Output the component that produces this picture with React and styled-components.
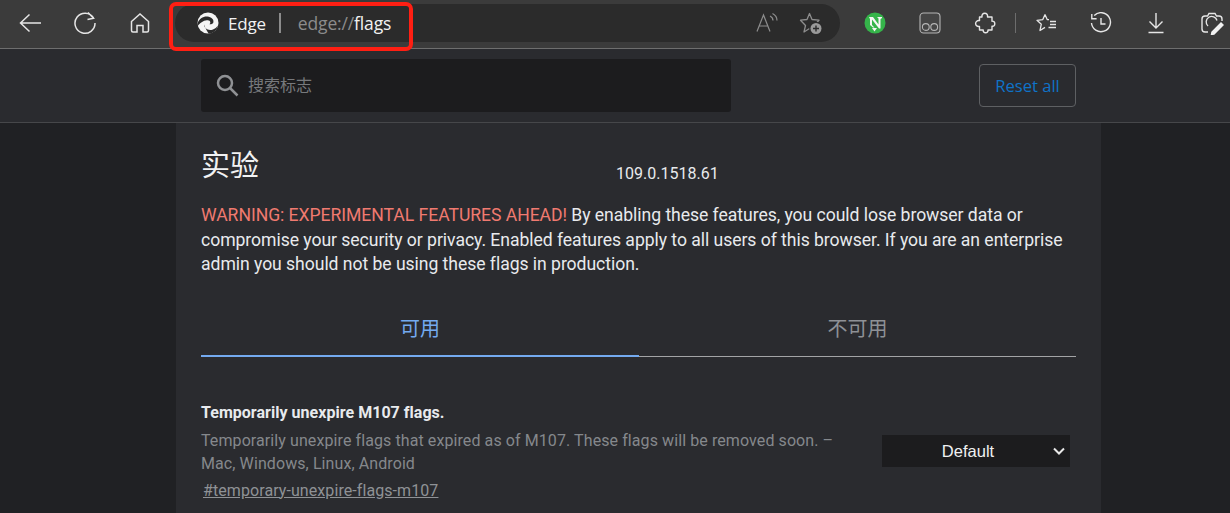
import React from "react";
import styled, { createGlobalStyle } from "styled-components";

const Global = createGlobalStyle`
  html, body { margin: 0; padding: 0; background: #202124; }
  body { width: 1230px; height: 513px; overflow: hidden; font-family: Roboto, "Noto Sans CJK SC", sans-serif; }
  * { box-sizing: border-box; }
`;

const Page = styled.div`
  width: 1230px;
  height: 513px;
  overflow: hidden;
  background: #202124;
  display: flex;
  flex-direction: column;
`;

const Toolbar = styled.header`
  position: relative;
  flex: none;
  height: 49px;
  background: #3b3b3b;
  border-bottom: 1px solid #6e6e6e;
  display: flex;
  align-items: center;
  padding: 0 0 2px 12px;
`;

const Tool = styled.div`
  flex: none;
  width: ${(p) => p.$w || 55}px;
  height: 30px;
  display: flex;
  align-items: center;
  justify-content: center;
  color: #e6e6e6;
`;

const AddressBar = styled.div`
  flex: none;
  width: 665px;
  height: 38px;
  margin: 0 8px 0 17px;
  border-radius: 19px;
  background: #2b2b2b;
  display: flex;
  align-items: center;
  padding-left: 22px;
  font-family: "Open Sans", "Noto Sans", sans-serif;
`;

const SiteName = styled.span`
  margin-left: 9px;
  font-size: 17px;
  letter-spacing: -0.2px;
  color: #f2f2f2;
`;

const BarDivider = styled.span`
  width: 2px;
  height: 20px;
  margin: 0 17px 0 13px;
  background: #8c8c8c;
`;

const Url = styled.span`
  font-size: 17.5px;
  letter-spacing: -0.15px;
  color: #8b8b8b;
`;

const UrlStrong = styled.span`
  color: #f2f2f2;
`;

const BarActions = styled.div`
  margin-left: auto;
  display: flex;
  align-items: center;
  gap: 20px;
  padding-right: 17px;
  color: #8d8d8d;
`;

const ToolDivider = styled.span`
  flex: none;
  width: 1px;
  height: 20px;
  margin-left: 4px;
  background: #6d6d6d;
`;

const Callout = styled.div`
  position: absolute;
  left: 169px;
  top: 2px;
  width: 244px;
  height: 49px;
  border: 4px solid #ff1f13;
  border-radius: 7px;
  pointer-events: none;
  z-index: 2;
`;

const SearchBand = styled.section`
  flex: none;
  height: 74px;
  background: #2a2b2f;
  border-bottom: 1px solid #46474a;
  display: flex;
  align-items: flex-start;
  padding: 10px 0 0 201px;
`;

const SearchBox = styled.div`
  width: 530px;
  height: 53px;
  background: #1c1c1e;
  border-radius: 3px;
  display: flex;
  align-items: center;
  padding-left: 15px;
  gap: 9px;
  color: #85878a;
`;

const SearchInput = styled.input`
  flex: 1;
  min-width: 0;
  border: 0;
  outline: 0;
  background: transparent;
  font-family: "Noto Sans CJK SC", sans-serif;
  font-size: 16px;
  color: #e8eaed;
  padding: 0 0 4px;
  &::placeholder { color: #77797c; opacity: 1; }
`;

const ResetButton = styled.button`
  margin: 5px 0 0 248px;
  width: 97px;
  height: 43px;
  background: transparent;
  border: 1px solid #5e6063;
  border-radius: 4px;
  color: #0f73c8;
  font-family: "Open Sans", "Noto Sans", sans-serif;
  font-size: 16.6px;
  padding: 0;
`;

const Panel = styled.main`
  flex: 1;
  width: 925px;
  margin-left: 176px;
  background: #2a2b2f;
  padding: 0 25px;
`;

const TitleRow = styled.div`
  position: relative;
  height: 80px;
  padding-top: 20px;
`;

const Title = styled.h1`
  margin: 0;
  font-family: "Noto Sans CJK SC", sans-serif;
  font-weight: 400;
  font-size: 29px;
  line-height: 40px;
  color: #f1f2f3;
`;

const Version = styled.div`
  position: absolute;
  left: 415px;
  top: 41px;
  font-size: 16px;
  line-height: 20px;
  letter-spacing: 0.02px;
  color: #e8eaed;
`;

const Warning = styled.p`
  margin: 0;
  font-size: 17.6px;
  line-height: 24.5px;
  letter-spacing: -0.05px;
  color: #e8eaed;
`;

const Danger = styled.span`
  color: #f07a70;
`;

const Tabs = styled.nav`
  display: flex;
  width: 875px;
  height: 52px;
  margin-top: 28px;
  border-bottom: 1px solid #a3a4a6;
`;

const Tab = styled.div`
  flex: none;
  width: ${(p) => p.$w}px;
  height: 52px;
  padding-top: 9px;
  text-align: center;
  font-family: "Noto Sans CJK SC", sans-serif;
  font-size: 20px;
  line-height: 28px;
  color: ${(p) => (p.$active ? "#74aaf0" : "#8e9196")};
  border-bottom: ${(p) => (p.$active ? "2px solid #74aaf0" : "0")};
`;

const Flag = styled.article`
  display: flex;
  width: 875px;
  margin-top: 46px;
`;

const FlagText = styled.div`
  flex: none;
  width: 681px;
`;

const FlagTitle = styled.h2`
  margin: 0;
  font-size: 16px;
  line-height: 20px;
  font-weight: 700;
  letter-spacing: 0.03px;
  color: #e8eaed;
`;

const FlagDesc = styled.p`
  margin: 6px 0 0;
  max-width: 650px;
  font-size: 16px;
  line-height: 23px;
  letter-spacing: 0.09px;
  color: #85888c;
`;

const FlagLink = styled.a`
  display: block;
  margin: 4px 0 0 2px;
  font-size: 16px;
  line-height: 24px;
  letter-spacing: 0.08px;
  color: #8f9296;
  text-decoration: underline;
`;

const SelectWrap = styled.div`
  position: relative;
  flex: none;
  width: 188px;
  height: 32px;
  margin-top: 32px;
`;

const Select = styled.select`
  appearance: none;
  width: 100%;
  height: 100%;
  border: 0;
  border-radius: 0;
  background: #1c1c1e;
  color: #f0f1f2;
  font-family: "Liberation Sans", Arial, sans-serif;
  font-size: 16.5px;
  text-align: center;
  padding: 0 16px 0 0;
`;

const Chevron = styled.svg`
  position: absolute;
  right: 5px;
  top: 12px;
  pointer-events: none;
`;

const Icon = ({ w = 24, h = 24, sw = 1.5, children }) => (
  <svg width={w} height={h} viewBox={`0 0 ${w} ${h}`} fill="none" stroke="currentColor" strokeWidth={sw}>
    {children}
  </svg>
);

const EdgeLogo = () => (
  <svg width="22" height="22" viewBox="0 0 22 22">
    <circle cx="11" cy="11" r="10.5" fill="#f5f5f5" />
    <path d="M0.6 11.5C2 6.5 6.5 4.2 10.5 4.6C14.2 5 17 7.4 16.4 10.2C16 12 14 12.4 12.4 12.2C14 11 13.6 8.6 10.8 8.2C6.8 7.6 3 11 0.6 14Z" fill="#2b2b2b" />
    <path d="M7 12.6C7.2 16.6 11.4 19 16 17.4C18 16.7 19.6 15.4 21 13.4C20 18.4 15.8 21.6 11.6 21.4C11.4 21.4 9.2 18.2 7 12.6Z" fill="#2b2b2b" />
  </svg>
);

export default function App() {
  return (
    <Page>
      <Global />
      <Toolbar>
        <Callout />
        <Tool $w={36}>
          <Icon><path d="M23 12H2.5M11.5 3.5L2.5 12L11.5 20.5" /></Icon>
        </Tool>
        <Tool $w={74}>
          <Icon><path d="M20.5 7A10 10 0 1 0 22 12M15 1.5L20.5 7.2L14.5 8.5" /></Icon>
        </Tool>
        <Tool $w={36}>
          <Icon><path d="M3.5 10.5L12 3L20.5 10.5V19.5A1.5 1.5 0 0 1 19 21H15V14.5H9V21H5A1.5 1.5 0 0 1 3.5 19.5Z" /></Icon>
        </Tool>
        <AddressBar>
          <EdgeLogo />
          <SiteName>Edge</SiteName>
          <BarDivider />
          <Url>edge://<UrlStrong>flags</UrlStrong></Url>
          <BarActions>
            <Icon w={24} sw={1.2}>
              <path d="M2 20.5L8.5 4L15 20.5M4.5 15H12.5" />
              <path d="M15 5C17 6 18 7.5 18 9.5M17.5 2.5C20.5 4 22 6.5 22 9.5" />
            </Icon>
            <svg width="24" height="24" viewBox="0 0 24 24" fill="none" stroke="currentColor" strokeWidth="1.3">
              <path d="M10.5 2.5L13 8.5L20 9.2L15.5 14L17 21L10.5 17.5L5 21L6.5 14.5L1.5 9.2L8 8.5Z" strokeLinejoin="round" />
              <circle cx="17" cy="17.5" r="6.8" fill="#2b2b2b" stroke="none" />
              <circle cx="17" cy="17.5" r="5.5" fill="#9a9a9a" stroke="none" />
              <path d="M17 14.5V20.5M14 17.5H20" stroke="#2b2b2b" strokeWidth="1.4" />
            </svg>
          </BarActions>
        </AddressBar>
        <Tool $w={54}>
          <svg width="22" height="22" viewBox="0 0 22 22">
            <circle cx="11" cy="11" r="10.5" fill="#35b44a" />
            <path d="M5 5H9L14.5 12.5V6.5L13 5H18V6L16.5 7V16.5H15L8 7.5V13L10.5 15.5H9L6 13V7Z" fill="#f5f5f5" />
            <path d="M8 16H13L10.5 19.5Z" fill="#f5f5f5" />
          </svg>
        </Tool>
        <Tool $w={56}>
          <svg width="22" height="22" viewBox="0 0 22 22" fill="none" stroke="#b5b5b5" strokeWidth="1.1">
            <rect x="1" y="1" width="20" height="20" rx="3.5" fill="#454545" />
            <circle cx="6.8" cy="15" r="3.4" />
            <circle cx="15.2" cy="15" r="3.4" />
          </svg>
        </Tool>
        <Tool $w={53}>
          <Icon w={22} h={22} sw={1.4}>
            <path d="M5.5 5H8C7.5 2.6 9 1.2 10.8 1.2C12.6 1.2 14 2.6 13.5 5H18V9.2C19.8 8.8 20.8 10.2 20.8 11.8C20.8 13.4 19.8 14.6 18 14.2V18H14C14.2 19.6 13.2 20.8 11.6 20.8C10 20.8 9 19.6 9.2 18H5.5V14.4C3.4 14.8 1.6 13.6 1.6 11.6C1.6 9.6 3.4 8.2 5.5 8.6Z" strokeLinejoin="round" />
          </Icon>
        </Tool>
        <ToolDivider />
        <Tool $w={60}>
          <Icon w={22} h={22} sw={1.3}>
            <path d="M10 2.5L12.2 7.6H14M10 2.5L7.8 7.6L2 8.3L6.3 12.2L5 18.5L10 15.4M15 9.5H21M15 12.5H21M13.5 15.5H21" strokeLinejoin="round" />
          </Icon>
        </Tool>
        <Tool $w={50}>
          <Icon w={22} h={22} sw={1.4}>
            <path d="M4.2 3.5A9.5 9.5 0 1 1 1.5 11M1.8 2V6.8H6.6M11 6V12H15.5" />
          </Icon>
        </Tool>
        <Tool $w={60}>
          <Icon w={22} h={22} sw={1.4}>
            <path d="M11 1V15.5M4.5 9.5L11 16L17.5 9.5M3.5 20.5H18.5" />
          </Icon>
        </Tool>
        <Tool $w={52}>
          <svg width="24" height="24" viewBox="0 0 24 24" fill="none" stroke="currentColor" strokeWidth="1.4">
            <path d="M8 21H5A3 3 0 0 1 2 18V8A3 3 0 0 1 5 5H7.5L9 2.5H15L16.5 5H19A3 3 0 0 1 22 8V10" />
            <path d="M8 15A5.5 5.5 0 1 1 17 9.5" />
            <path d="M12 21L11.5 23.5L14 23L23 14L21 12Z" fill="#f2f2f2" stroke="#f2f2f2" />
          </svg>
        </Tool>
      </Toolbar>

      <SearchBand>
        <SearchBox>
          <svg width="23" height="23" viewBox="0 0 23 23" fill="none" stroke="#8f9194" strokeWidth="2.5">
            <circle cx="9" cy="9" r="7" />
            <path d="M14 14L21.5 21.5" />
          </svg>
          <SearchInput placeholder="搜索标志" />
        </SearchBox>
        <ResetButton>Reset all</ResetButton>
      </SearchBand>

      <Panel>
        <TitleRow>
          <Title>实验</Title>
          <Version>109.0.1518.61</Version>
        </TitleRow>
        <Warning>
          <Danger>WARNING: EXPERIMENTAL FEATURES AHEAD!</Danger> By enabling these features, you could lose browser data or compromise your security or privacy. Enabled features apply to all users of this browser. If you are an enterprise admin you should not be using these flags in production.
        </Warning>
        <Tabs>
          <Tab $w={438} $active>可用</Tab>
          <Tab $w={437}>不可用</Tab>
        </Tabs>
        <Flag>
          <FlagText>
            <FlagTitle>Temporarily unexpire M107 flags.</FlagTitle>
            <FlagDesc>Temporarily unexpire flags that expired as of M107. These flags will be removed soon. – Mac, Windows, Linux, Android</FlagDesc>
            <FlagLink>#temporary-unexpire-flags-m107</FlagLink>
          </FlagText>
          <SelectWrap>
            <Select defaultValue="Default">
              <option>Default</option>
              <option>Enabled</option>
              <option>Disabled</option>
            </Select>
            <Chevron width="12" height="8" viewBox="0 0 12 8" fill="none" stroke="#e8e8e8" strokeWidth="2">
              <path d="M1 1.5L6 6.5L11 1.5" />
            </Chevron>
          </SelectWrap>
        </Flag>
      </Panel>
    </Page>
  );
}
